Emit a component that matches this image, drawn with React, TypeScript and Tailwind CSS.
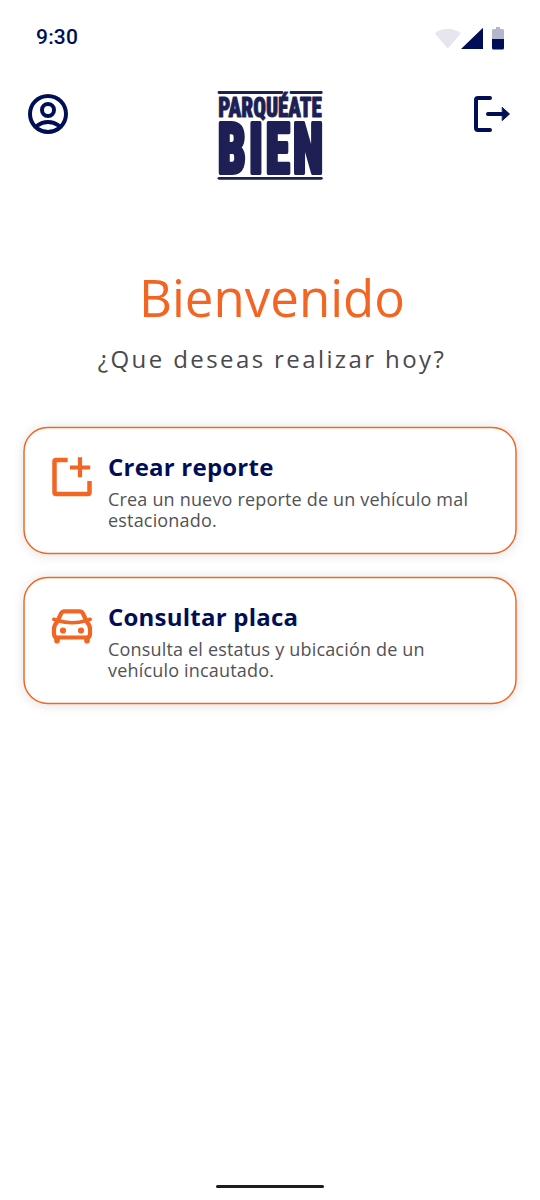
import type { ReactNode } from "react";

function StatusBar() {
  return (
    <div className="flex h-[78px] items-start justify-between pl-9 pr-9 pt-6">
      <span className="font-['Roboto',sans-serif] text-[21px] font-medium leading-[26px] tracking-[0.2px] text-[#000f55]">9:30</span>
      <svg width="70" height="24" viewBox="434 26 70 24" className="mt-0.5">
        <path d="M434.8 33.3A21 21 0 0 1 460.8 33.3L447.8 48.7Z" fill="#e6e7ee" />
        <path d="M461 49L483 27.8V49Z" fill="#000f55" />
        <path d="M496 27h4v2h2.500q1.500 0 1.500 1.500V39h-12V30.500q0-1.500 1.500-1.500H496Z" fill="#b2b7cc" />
        <path d="M492 39h12v9q0 1.500-1.500 1.500h-9q-1.500 0-1.500-1.500Z" fill="#000f55" />
      </svg>
    </div>
  );
}

function Logo() {
  return (
    <svg width="108" height="94" viewBox="216 88 108 94" className="mr-0.5 mt-2.5 overflow-visible" fill="#1d1f55" stroke="#1d1f55" strokeLinejoin="round">
      <path d="M219 92.500H282M291 92.500H321.300" strokeWidth="2.800" strokeLinecap="round" />
      <path d="M219 178.300H321.300" strokeWidth="2.800" strokeLinecap="round" />
      <g className="font-['Roboto',sans-serif] font-black [font-stretch:75%]">
        <text transform="translate(218.300 116.500) scale(1 1.400)" fontSize="20" strokeWidth="0.700" textLength="103.500" lengthAdjust="spacingAndGlyphs">PARQUÉATE</text>
        <text transform="translate(217.700 172.900) scale(1 1.410)" fontSize="49.5" strokeWidth="2.800" textLength="105.500" lengthAdjust="spacing">BIEN</text>
      </g>
    </svg>
  );
}

function Header() {
  return (
    <header className="flex h-[104px] items-start justify-between pl-6 pr-[26px]">
      <button aria-label="Perfil" className="mt-3">
        <svg width="48" height="48" viewBox="0 0 24 24" fill="#000f55">
          <path
            fillRule="evenodd"
            d="M12 2a10 10 0 1 0 0 20a10 10 0 0 0 0-20ZM7.350 18.500A8 8 0 0 1 16.650 18.500A8 8 0 0 1 7.350 18.500ZM18.140 17.120A9.950 9.950 0 0 0 5.860 17.120A8 8 0 1 1 18.140 17.120ZM12 6a4 4 0 1 0 0 8a4 4 0 0 0 0-8ZM12 8a2 2 0 1 1 0 4a2 2 0 0 1 0-4Z"
          />
        </svg>
      </button>
      <Logo />
      <button aria-label="Salir" className="mt-3">
        <svg width="44" height="48" viewBox="470 90 44 48" fill="none" stroke="#000f55" strokeWidth="4" strokeLinecap="round" strokeLinejoin="round">
          <path d="M490 98H478Q476 98 476 100V128Q476 130 478 130H490" />
          <path d="M488 114H502" />
          <path d="M502.500 107.700L509.500 114L502.500 120.300Z" fill="#000f55" strokeWidth="1" />
        </svg>
      </button>
    </header>
  );
}

function NewReportIcon() {
  return (
    <svg width="48" height="48" viewBox="48 453 48 48" fill="none" stroke="#f26522" strokeWidth="4.500">
      <path d="M67.700 460H56Q54.500 460 54.500 461.500V492.500Q54.500 494 56 494H88Q89.500 494 89.500 492.500V481" />
      <path d="M80 457.300V477.300M70 467.500H90.200" strokeWidth="4.200" />
    </svg>
  );
}

function CarIcon() {
  return (
    <svg width="48" height="48" viewBox="48 603 48 48" fill="none" stroke="#f26522" strokeWidth="4.200" strokeLinecap="round" strokeLinejoin="round">
      <path d="M58 620L61.300 613Q62.200 611.300 64 611.300H80Q81.800 611.300 82.700 613L86 620" />
      <path d="M53.800 619.300L57.500 620.500Q72 625 86.500 620.500L90.200 619.300" strokeWidth="3.600" />
      <path d="M57.500 621.500Q54 625 54 629V634Q54 637.500 57 637.500H87Q90 637.500 90 634V629Q90 625 86.500 621.500" />
      <path d="M57 638.500V640.700M87 638.500V640.700" strokeWidth="5.600" />
      <circle cx="63" cy="630.500" r="3.100" fill="#f26522" stroke="none" />
      <circle cx="81" cy="630.500" r="3.100" fill="#f26522" stroke="none" />
    </svg>
  );
}

function ActionCard({ icon, title, children }: { icon: ReactNode; title: string; children: ReactNode }) {
  return (
    <button className="relative flex h-[126px] w-full items-start pl-6 pt-[26px] text-left">
      <span className="absolute left-0 top-0 h-[255px] w-[987px] origin-top-left [transform:translate(-0.75px,-0.25px)_scale(0.5)] rounded-[49px] border-[3px] border-[#f26522] shadow-[0_2px_24px_rgba(0,0,0,0.11)]" />
      {icon}
      <span className="ml-3 flex flex-col">
        <span className="text-2xl font-bold leading-[27px] tracking-[0.225px] text-[#000f55]">{title}</span>
        <span className="mt-[9px] text-lg leading-[21px] tracking-[0.18px] text-[#525255]">{children}</span>
      </span>
    </button>
  );
}

export default function App() {
  return (
    <div className="flex h-[1200px] w-[540px] flex-col overflow-hidden bg-white font-['Open_Sans','Noto_Sans',sans-serif]">
      <StatusBar />
      <Header />
      <main className="flex flex-1 flex-col px-6">
        <h1 className="mt-[83px] pl-1 text-center text-[51px] leading-[64px] text-[#f26522]">Bienvenido</h1>
        <p className="mt-3.5 pl-1 text-center text-2xl leading-8 tracking-[2.4px] text-[#49494c]">¿Que deseas realizar hoy?</p>
        <div className="mt-[52px] flex flex-col gap-6">
          <ActionCard icon={<NewReportIcon />} title="Crear reporte">
            Crea un nuevo reporte de un vehículo mal
            <br />
            estacionado.
          </ActionCard>
          <ActionCard icon={<CarIcon />} title="Consultar placa">
            Consulta el estatus y ubicación de un
            <br />
            vehículo incautado.
          </ActionCard>
        </div>
      </main>
      <div className="mb-3 h-[3px] w-[108px] self-center rounded-full bg-[#1d1b20]" />
    </div>
  );
}
